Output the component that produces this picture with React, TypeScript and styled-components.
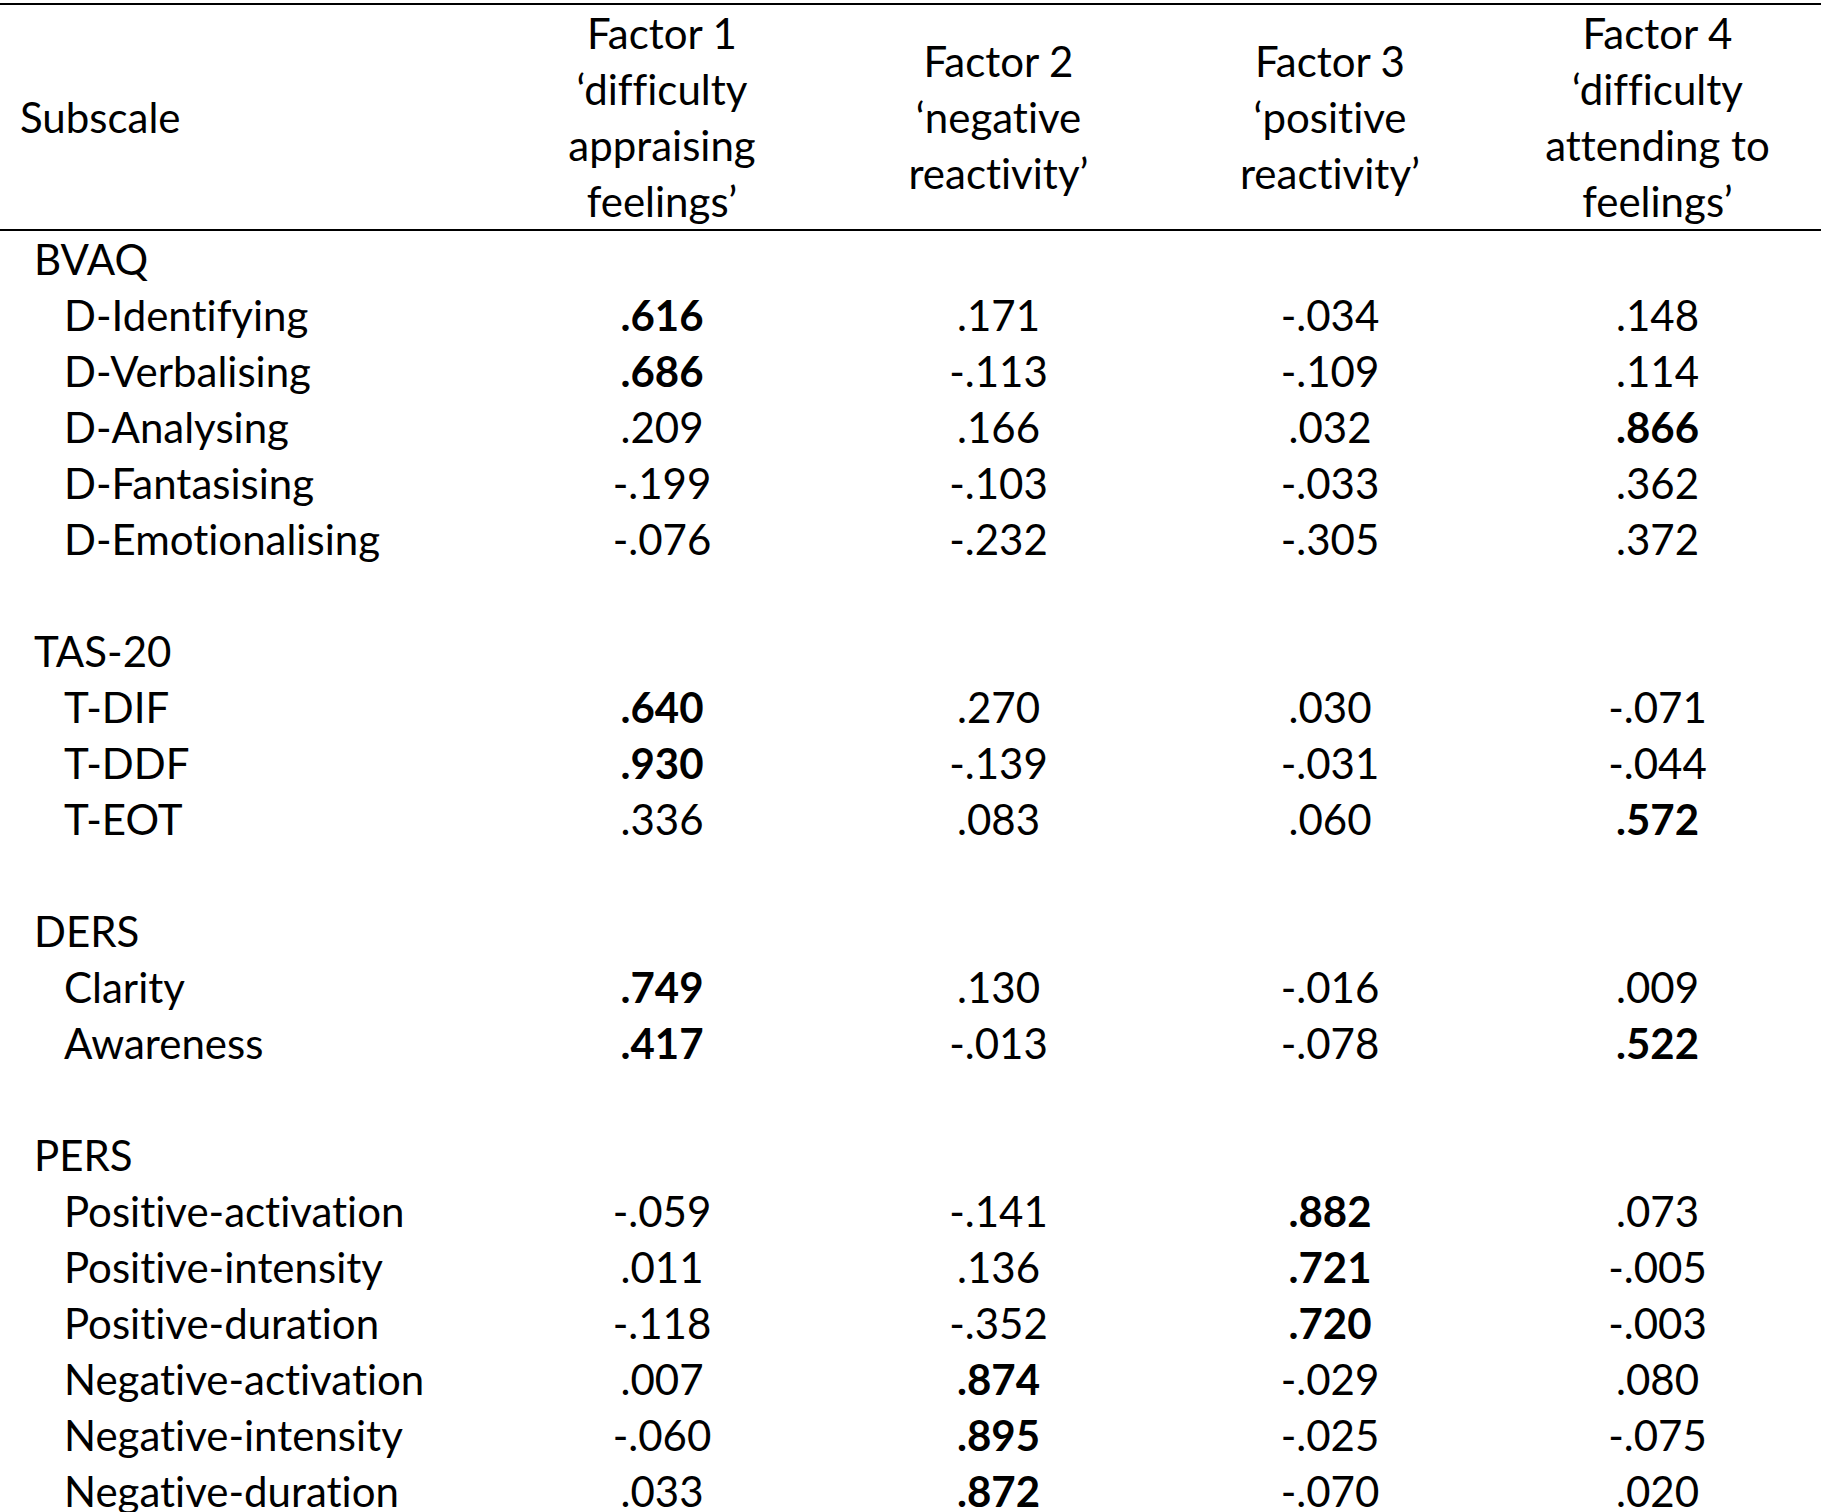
import React from "react";
import styled, { createGlobalStyle } from "styled-components";

const GlobalStyle = createGlobalStyle`
  html, body {
    margin: 0;
    padding: 0;
    background: #ffffff;
    overflow: hidden;
  }
  body {
    font-family: Lato, "Open Sans", "Liberation Sans", sans-serif;
    color: #000000;
  }
`;

const Page = styled.div`
  height: 1512px;
  overflow: hidden;
  background: #ffffff;
  padding-top: 3px;
  box-sizing: border-box;
`;

const Table = styled.table`
  border-collapse: collapse;
  table-layout: fixed;
  width: 1821px;
  font-family: Lato, "Open Sans", "Liberation Sans", sans-serif;
  font-size: 42px;
  line-height: 56px;
  font-variant-ligatures: none;
  font-feature-settings: "liga" 0, "clig" 0;
  color: #000;
  border-top: 2px solid #000;
`;

const HeadRow = styled.tr`
  border-bottom: 2px solid #000;
`;

const HeadCell = styled.th<{ $left?: boolean }>`
  padding: 0;
  font-weight: 400;
  vertical-align: middle;
  text-align: ${(p) => (p.$left ? "left" : "center")};
  padding-left: ${(p) => (p.$left ? "20px" : "0")};
  height: 224px;
`;

const Row = styled.tr`
  height: 56px;
`;

const LabelCell = styled.td<{ $level: number }>`
  padding: 0;
  padding-left: ${(p) => (p.$level === 0 ? "34px" : "64px")};
  white-space: nowrap;
  vertical-align: middle;
`;

const ValueCell = styled.td<{ $bold?: boolean }>`
  padding: 0;
  text-align: center;
  vertical-align: middle;
  font-weight: ${(p) => (p.$bold ? 700 : 400)};
  white-space: nowrap;
`;

type Item = { label: string; values: string[]; bold?: number[] };
type Group = { name: string; items: Item[] };

const groups: Group[] = [
  {
    name: "BVAQ",
    items: [
      { label: "D-Identifying", values: [".616", ".171", "-.034", ".148"], bold: [0] },
      { label: "D-Verbalising", values: [".686", "-.113", "-.109", ".114"], bold: [0] },
      { label: "D-Analysing", values: [".209", ".166", ".032", ".866"], bold: [3] },
      { label: "D-Fantasising", values: ["-.199", "-.103", "-.033", ".362"] },
      { label: "D-Emotionalising", values: ["-.076", "-.232", "-.305", ".372"] },
    ],
  },
  {
    name: "TAS-20",
    items: [
      { label: "T-DIF", values: [".640", ".270", ".030", "-.071"], bold: [0] },
      { label: "T-DDF", values: [".930", "-.139", "-.031", "-.044"], bold: [0] },
      { label: "T-EOT", values: [".336", ".083", ".060", ".572"], bold: [3] },
    ],
  },
  {
    name: "DERS",
    items: [
      { label: "Clarity", values: [".749", ".130", "-.016", ".009"], bold: [0] },
      { label: "Awareness", values: [".417", "-.013", "-.078", ".522"], bold: [0, 3] },
    ],
  },
  {
    name: "PERS",
    items: [
      { label: "Positive-activation", values: ["-.059", "-.141", ".882", ".073"], bold: [2] },
      { label: "Positive-intensity", values: [".011", ".136", ".721", "-.005"], bold: [2] },
      { label: "Positive-duration", values: ["-.118", "-.352", ".720", "-.003"], bold: [2] },
      { label: "Negative-activation", values: [".007", ".874", "-.029", ".080"], bold: [1] },
      { label: "Negative-intensity", values: ["-.060", ".895", "-.025", "-.075"], bold: [1] },
      { label: "Negative-duration", values: [".033", ".872", "-.070", ".020"], bold: [1] },
    ],
  },
];

const headers: string[][] = [
  ["Factor 1", "‘difficulty", "appraising", "feelings’"],
  ["Factor 2", "‘negative", "reactivity’"],
  ["Factor 3", "‘positive", "reactivity’"],
  ["Factor 4", "‘difficulty", "attending to", "feelings’"],
];

const colWidths = [493, 338, 335, 328, 327];

export default function App() {
  return (
    <>
      <GlobalStyle />
      <Page>
        <Table>
          <colgroup>
            {colWidths.map((w, i) => (
              <col key={i} style={{ width: `${w}px` }} />
            ))}
          </colgroup>
          <thead>
            <HeadRow>
              <HeadCell $left>Subscale</HeadCell>
              {headers.map((lines, i) => (
                <HeadCell key={i}>
                  {lines.map((l, j) => (
                    <React.Fragment key={j}>
                      {j > 0 && <br />}
                      {l}
                    </React.Fragment>
                  ))}
                </HeadCell>
              ))}
            </HeadRow>
          </thead>
          <tbody>
            {groups.map((g, gi) => (
              <React.Fragment key={g.name}>
                {gi > 0 && (
                  <Row>
                    <LabelCell $level={0} colSpan={5} />
                  </Row>
                )}
                <Row>
                  <LabelCell $level={0}>{g.name}</LabelCell>
                  <ValueCell />
                  <ValueCell />
                  <ValueCell />
                  <ValueCell />
                </Row>
                {g.items.map((it) => (
                  <Row key={it.label}>
                    <LabelCell $level={1}>{it.label}</LabelCell>
                    {it.values.map((v, vi) => (
                      <ValueCell key={vi} $bold={it.bold?.includes(vi)}>
                        {v}
                      </ValueCell>
                    ))}
                  </Row>
                ))}
              </React.Fragment>
            ))}
          </tbody>
        </Table>
      </Page>
    </>
  );
}
